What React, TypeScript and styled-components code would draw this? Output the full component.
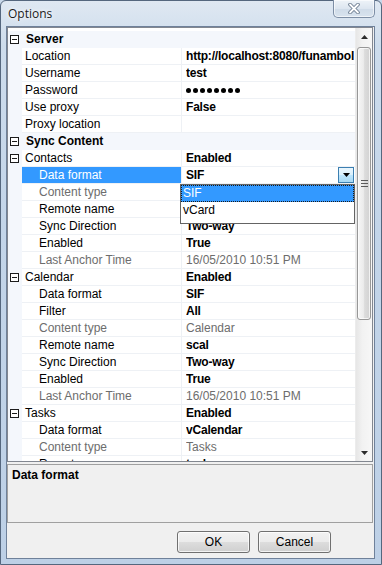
import React from "react";
import styled, { createGlobalStyle } from "styled-components";

const Global = createGlobalStyle`
  html, body { margin: 0; padding: 0; overflow: hidden; background: #c8d8ea; }
  body { font-family: "Liberation Sans", Arial, sans-serif; font-size: 12px; }
  * { box-sizing: border-box; }
`;

const Window = styled.div`
  width: 382px;
  height: 565px;
  display: flex;
  flex-direction: column;
  padding: 0 6px 5px 5px;
  border: 1px solid #55677e;
  border-radius: 6px 6px 0 0;
  background: linear-gradient(180deg, #dfe8f2 0%, #cddcec 8%, #c3d5e9 40%, #bdd0e6 100%);
`;

const TitleBar = styled.div`
  height: 25px;
  flex: none;
  display: flex;
  justify-content: space-between;
  align-items: flex-start;
`;

const Title = styled.div`
  margin: 6px 0 0 2px;
  font-family: "Open Sans", "Noto Sans", sans-serif;
  font-size: 12px;
  line-height: 14px;
  color: #1a1a1a;
  text-shadow: 0 0 6px rgba(255, 255, 255, 0.95), 0 0 3px rgba(255, 255, 255, 0.9);
`;

const CloseButton = styled.div`
  width: 42px;
  height: 18px;
  margin-top: -1px;
  margin-right: 0;
  border: 1px solid #7d8ea5;
  border-top: none;
  border-radius: 0 0 5px 5px;
  background: linear-gradient(180deg, #eef3f8 0%, #dde6f0 50%, #cfdbe8 51%, #d8e3ee 100%);
  box-shadow: inset 0 0 0 1px rgba(255, 255, 255, 0.6);
  display: flex;
  align-items: center;
  justify-content: center;
`;

const Client = styled.div`
  flex: 1;
  display: flex;
  flex-direction: column;
  background: #f0f0f0;
  border: 1px solid #6f819a;
  padding: 0 1px 0 0;
`;

const Grid = styled.div`
  height: 435px;
  flex: none;
  display: flex;
  border: 1px solid #828790;
  background: #ffffff;
`;

const Rows = styled.div`
  flex: 1;
  padding-top: 3px;
  overflow: hidden;
  position: relative;
`;

const Row = styled.div`
  display: flex;
  height: 17px;
  position: relative;
`;

const Gutter = styled.div`
  width: 14px;
  flex: none;
  height: 17px;
  background: #f4f7fc;
  display: flex;
  align-items: flex-start;
  justify-content: center;
  padding-top: 4px;
  padding-right: 1px;
`;

const Minus = styled.div`
  width: 9px;
  height: 9px;
  border: 1px solid #1c1c1c;
  background: #fff;
  display: flex;
  align-items: center;
  justify-content: center;
  &::after {
    content: "";
    width: 5px;
    height: 1px;
    background: #1c1c1c;
  }
`;

const CategoryCell = styled.div`
  flex: 1;
  height: 17px;
  background: #f4f7fc;
  padding-left: 4px;
  font-weight: bold;
  line-height: 16px;
  color: #000;
`;

const NameCell = styled.div<{ $indent: number; $selected?: boolean; $dim?: boolean }>`
  width: 160px;
  flex: none;
  height: 17px;
  line-height: 16px;
  padding-left: ${(p) => 3 + p.$indent * 14}px;
  border-bottom: 1px solid #eef1f5;
  border-right: 1px solid #eef1f5;
  white-space: nowrap;
  overflow: hidden;
  background: ${(p) => (p.$selected ? "#3399ff" : "#ffffff")};
  color: ${(p) => (p.$selected ? "#ffffff" : p.$dim ? "#6d6d6d" : "#000000")};
`;

const ValueCell = styled.div<{ $dim?: boolean }>`
  flex: 1;
  height: 17px;
  line-height: 16px;
  padding-left: 4px;
  border-bottom: 1px solid #eef1f5;
  white-space: nowrap;
  position: relative;
  display: flex;
  align-items: flex-start;
  font-weight: ${(p) => (p.$dim ? "normal" : "bold")};
  letter-spacing: ${(p) => (p.$dim ? "0" : "-0.2px")};
  color: ${(p) => (p.$dim ? "#6d6d6d" : "#000000")};
`;

const ValueText = styled.span`
  flex: 1;
  overflow: hidden;
`;

const Dots = styled.span`
  display: flex;
  gap: 2px;
  margin-top: 6px;
`;

const Dot = styled.span`
  width: 5px;
  height: 5px;
  border-radius: 50%;
  background: #000;
`;

const DropButton = styled.div`
  width: 16px;
  height: 16px;
  margin-right: 1px;
  border: 1px solid #3c7fb1;
  background: linear-gradient(180deg, #eaf6fd 0%, #d9f0fc 50%, #bee6fd 51%, #a7d9f5 100%);
  display: flex;
  align-items: center;
  justify-content: center;
`;

const DropList = styled.div`
  position: absolute;
  top: 17px;
  left: -2px;
  width: 175px;
  z-index: 5;
  background: #ffffff;
  border: 1px solid #646464;
  padding-bottom: 4px;
  font-weight: normal;
  letter-spacing: 0;
`;

const DropItem = styled.div<{ $active?: boolean }>`
  height: 17px;
  line-height: 16px;
  padding-left: 2px;
  color: ${(p) => (p.$active ? "#ffffff" : "#000000")};
  background: ${(p) => (p.$active ? "#3399ff" : "transparent")};
  outline: ${(p) => (p.$active ? "1px dotted #1a1a1a" : "none")};
  outline-offset: -1px;
`;

const ScrollBar = styled.div`
  width: 17px;
  flex: none;
  display: flex;
  flex-direction: column;
  background: linear-gradient(90deg, #e6e6e6 0%, #f2f2f2 40%, #f7f7f7 100%);
  border-left: 1px solid #ececec;
`;

const ArrowBox = styled.div`
  height: 17px;
  flex: none;
  display: flex;
  align-items: center;
  justify-content: center;
`;

const Track = styled.div`
  flex: 1;
  display: flex;
  flex-direction: column;
  padding: 2px 1px 0 1px;
`;

const Thumb = styled.div`
  height: 273px;
  border: 1px solid #979797;
  border-radius: 3px;
  background: linear-gradient(90deg, #f6f6f6 0%, #ececec 45%, #dcdcdc 55%, #d2d2d2 100%);
  box-shadow: inset 0 0 0 1px rgba(255, 255, 255, 0.7);
  display: flex;
  align-items: center;
  justify-content: center;
`;

const Desc = styled.div`
  height: 59px;
  flex: none;
  margin-top: 2px;
  border: 1px solid #a0a0a0;
  background: #f0f0f0;
  padding: 3px 0 0 4px;
`;

const DescTitle = styled.div`
  font-weight: bold;
  line-height: 14px;
  color: #000;
`;

const Buttons = styled.div`
  display: flex;
  justify-content: flex-end;
  gap: 8px;
  margin-top: 8px;
  padding-right: 42px;
`;

const Button = styled.div`
  width: 73px;
  height: 22px;
  border: 1px solid #707070;
  border-radius: 3px;
  background: linear-gradient(180deg, #f2f2f2 0%, #ebebeb 50%, #dddddd 51%, #cfcfcf 100%);
  box-shadow: inset 0 0 0 1px rgba(255, 255, 255, 0.75);
  display: flex;
  align-items: center;
  justify-content: center;
  color: #000;
  font-size: 12px;
`;

type Item =
  | { kind: "cat"; label: string }
  | {
      kind: "prop";
      label: string;
      value?: string;
      indent: number;
      expand?: boolean;
      dim?: boolean;
      password?: boolean;
      selected?: boolean;
    };

const items: Item[] = [
  { kind: "cat", label: "Server" },
  { kind: "prop", label: "Location", value: "http://localhost:8080/funambol", indent: 0 },
  { kind: "prop", label: "Username", value: "test", indent: 0 },
  { kind: "prop", label: "Password", indent: 0, password: true },
  { kind: "prop", label: "Use proxy", value: "False", indent: 0 },
  { kind: "prop", label: "Proxy location", value: "", indent: 0 },
  { kind: "cat", label: "Sync Content" },
  { kind: "prop", label: "Contacts", value: "Enabled", indent: 0, expand: true },
  { kind: "prop", label: "Data format", value: "SIF", indent: 1, selected: true },
  { kind: "prop", label: "Content type", value: "", indent: 1, dim: true },
  { kind: "prop", label: "Remote name", value: "", indent: 1 },
  { kind: "prop", label: "Sync Direction", value: "Two-way", indent: 1 },
  { kind: "prop", label: "Enabled", value: "True", indent: 1 },
  { kind: "prop", label: "Last Anchor Time", value: "16/05/2010 10:51 PM", indent: 1, dim: true },
  { kind: "prop", label: "Calendar", value: "Enabled", indent: 0, expand: true },
  { kind: "prop", label: "Data format", value: "SIF", indent: 1 },
  { kind: "prop", label: "Filter", value: "All", indent: 1 },
  { kind: "prop", label: "Content type", value: "Calendar", indent: 1, dim: true },
  { kind: "prop", label: "Remote name", value: "scal", indent: 1 },
  { kind: "prop", label: "Sync Direction", value: "Two-way", indent: 1 },
  { kind: "prop", label: "Enabled", value: "True", indent: 1 },
  { kind: "prop", label: "Last Anchor Time", value: "16/05/2010 10:51 PM", indent: 1, dim: true },
  { kind: "prop", label: "Tasks", value: "Enabled", indent: 0, expand: true },
  { kind: "prop", label: "Data format", value: "vCalendar", indent: 1 },
  { kind: "prop", label: "Content type", value: "Tasks", indent: 1, dim: true },
  { kind: "prop", label: "Remote name", value: "task", indent: 1 },
];

const CloseGlyph = () => (
  <svg width="12" height="11" viewBox="0 0 12 11">
    <path d="M2 1.5 L10 9.5 M10 1.5 L2 9.5" stroke="#6a7a8e" strokeWidth="3.6" strokeLinecap="round" />
    <path d="M2 1.5 L10 9.5 M10 1.5 L2 9.5" stroke="#ffffff" strokeWidth="1.8" strokeLinecap="round" />
  </svg>
);

const TriangleDown = ({ color = "#000" }: { color?: string }) => (
  <svg width="7" height="4" viewBox="0 0 7 4">
    <path d="M0 0 H7 L3.5 4 Z" fill={color} />
  </svg>
);

const TriangleUp = ({ color = "#000" }: { color?: string }) => (
  <svg width="7" height="4" viewBox="0 0 7 4">
    <path d="M0 4 H7 L3.5 0 Z" fill={color} />
  </svg>
);

const Grip = () => (
  <svg width="7" height="7" viewBox="0 0 7 7">
    <path d="M0 0.5 H7 M0 3.5 H7 M0 6.5 H7" stroke="#5a5a5a" strokeWidth="1" />
  </svg>
);

export default function App() {
  return (
    <>
      <Global />
      <Window>
        <TitleBar>
          <Title>Options</Title>
          <CloseButton>
            <CloseGlyph />
          </CloseButton>
        </TitleBar>
        <Client>
          <Grid>
            <Rows>
              {items.map((it, i) => {
                if (it.kind === "cat") {
                  return (
                    <Row key={i}>
                      <Gutter>
                        <Minus />
                      </Gutter>
                      <CategoryCell>{it.label}</CategoryCell>
                    </Row>
                  );
                }
                return (
                  <Row key={i}>
                    <Gutter>{it.expand ? <Minus /> : null}</Gutter>
                    <NameCell $indent={it.indent} $selected={it.selected} $dim={it.dim}>
                      {it.label}
                    </NameCell>
                    <ValueCell $dim={it.dim}>
                      {it.password ? (
                        <Dots>
                          {Array.from({ length: 8 }).map((_, d) => (
                            <Dot key={d} />
                          ))}
                        </Dots>
                      ) : (
                        <ValueText>{it.value}</ValueText>
                      )}
                      {it.selected ? (
                        <>
                          <DropButton>
                            <TriangleDown />
                          </DropButton>
                          <DropList>
                            <DropItem $active>SIF</DropItem>
                            <DropItem>vCard</DropItem>
                          </DropList>
                        </>
                      ) : null}
                    </ValueCell>
                  </Row>
                );
              })}
            </Rows>
            <ScrollBar>
              <ArrowBox>
                <TriangleUp color="#2b2b2b" />
              </ArrowBox>
              <Track>
                <Thumb>
                  <Grip />
                </Thumb>
              </Track>
              <ArrowBox>
                <TriangleDown color="#2b2b2b" />
              </ArrowBox>
            </ScrollBar>
          </Grid>
          <Desc>
            <DescTitle>Data format</DescTitle>
          </Desc>
          <Buttons>
            <Button>OK</Button>
            <Button>Cancel</Button>
          </Buttons>
        </Client>
      </Window>
    </>
  );
}
